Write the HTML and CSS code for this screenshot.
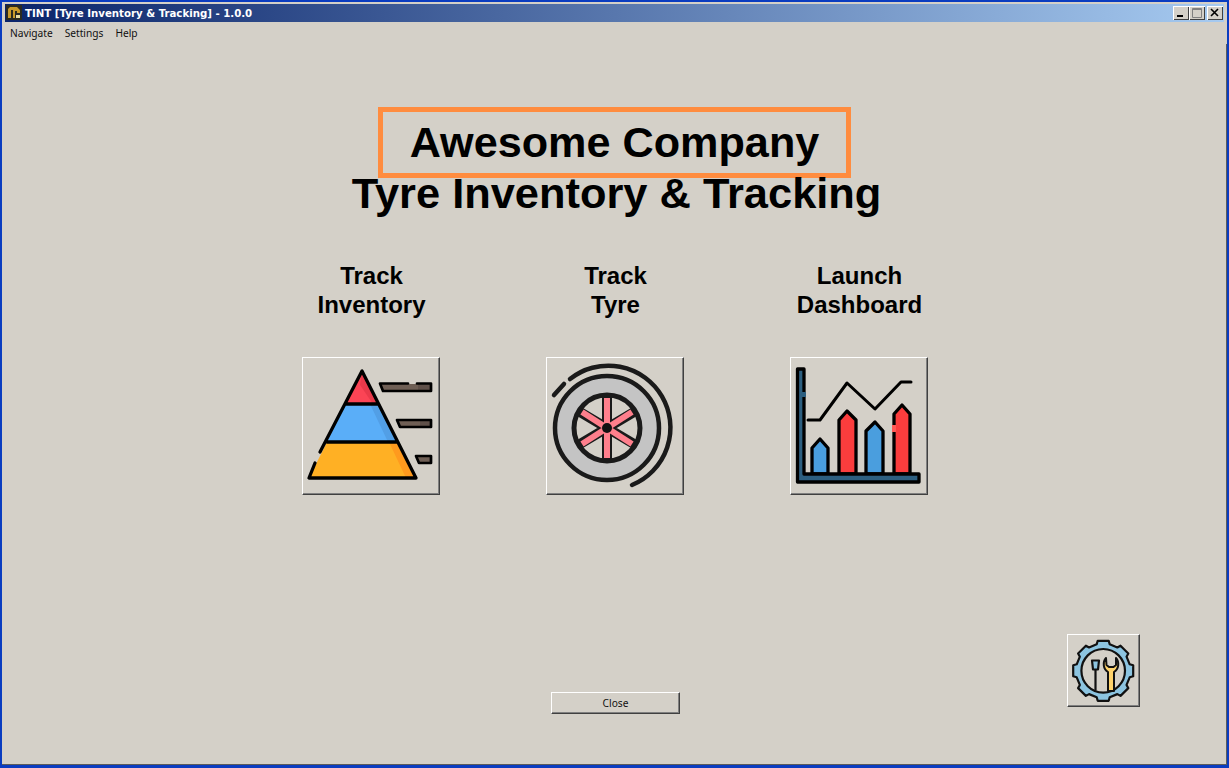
FILE: index.html
```html
<!DOCTYPE html>
<html lang="en">
<head>
  <meta charset="UTF-8" />
  <meta name="viewport" content="width=device-width, initial-scale=1.0" />
  <title>TINT [Tyre Inventory &amp; Tracking] - 1.0.0</title>
  <link rel="stylesheet" href="styles.css">
</head>
<body>
  <div class="window">
    <header class="titlebar">
      <svg class="app-icon" viewBox="0 0 16 16" width="16" height="16">
        <rect x="0" y="0" width="16" height="15" fill="#2b2a20"/>
        <path d="M2 13V4l2-2h7l3 3v3h-3V6H9v7H7V5H5v8z" fill="#c99a2a"/>
        <rect x="10" y="10" width="4" height="3" fill="#e8dca0"/>
      </svg>
      <span class="titlebar-text">TINT [Tyre Inventory &amp; Tracking] - 1.0.0</span>
      <div class="window-controls">
        <span class="win-btn">
          <svg viewBox="0 0 16 14" width="16" height="14"><rect x="4" y="9" width="6" height="2" fill="#000"/></svg>
        </span>
        <span class="win-btn">
          <svg viewBox="0 0 16 14" width="16" height="14"><path d="M3.500 2.500h9v9h-9z M3.500 3.500h9" fill="none" stroke="#808080"/></svg>
        </span>
        <span class="win-btn win-btn-close">
          <svg viewBox="0 0 16 14" width="16" height="14"><path d="M4 3l7 7M11 3l-7 7" fill="none" stroke="#000" stroke-width="1.600"/></svg>
        </span>
      </div>
    </header>

    <nav class="menubar">
      <span>Navigate</span>
      <span>Settings</span>
      <span>Help</span>
    </nav>

    <main class="content">
      <div class="heading">
        <h1 class="company">Awesome Company</h1>
        <h2 class="product">Tyre Inventory &amp; Tracking</h2>
      </div>

      <div class="actions">
        <div class="action">
          <div class="action-label">Track<br>Inventory</div>
          <button class="icon-btn" type="button">
            <svg viewBox="1 1 136 136" width="136" height="136">
              <path d="M60 14L43 47H76z" fill="#fb4455"/>
              <path d="M58 28L60 14L76 47H71z" fill="#e9394a"/>
              <path d="M43 47L25 85H95L76 47z" fill="#5aaef8"/>
              <path d="M68 47l18 38h9L76 47z" fill="#529fe6"/>
              <path d="M25 85L7 121H114L95 85z" fill="#ffb024"/>
              <path d="M87 85l17 36h10L95 85z" fill="#ff9a1e"/>
              <path d="M13 106L7 121H114L60 14L18 95M43 47H76M25 85H95" fill="none" stroke="#000" stroke-width="3.300" stroke-linecap="round" stroke-linejoin="round"/>
              <path d="M78 27H129V34H81z" fill="#6f5f55"/>
              <path d="M95 63H129V70H98z" fill="#6f5f55"/>
              <path d="M114 99H129V106H117z" fill="#6f5f55"/>
              <path d="M116 27H129V34H116zM118 63H129V70H118z" fill="#5f5049"/>
              <path d="M106 26.500H78L81 34H129V26.500H115M95 63H129V70H98zM114 99H129V106H117z" fill="none" stroke="#000" stroke-width="2.700" stroke-linecap="round" stroke-linejoin="round"/>
            </svg>
          </button>
        </div>
        <div class="action">
          <div class="action-label">Track<br>Tyre</div>
          <button class="icon-btn" type="button">
            <svg viewBox="1 1 136 136" width="136" height="136">
              <circle cx="61" cy="71" r="52" fill="#c4c4c4" stroke="#1a1a1a" stroke-width="4.500"/>
              <circle cx="61" cy="71" r="33" fill="#d4d0c8" stroke="#1a1a1a" stroke-width="5"/>
              <path d="M61 40V102M34 55L88 87M88 55L34 87" stroke="#1a1a1a" stroke-width="10"/>
              <path d="M61 41V101M36 55L86 87M86 55L36 87" stroke="#ff7f8c" stroke-width="6"/>
              <circle cx="61" cy="71" r="5" fill="#111"/>
              <path d="M24 22A62 62 0 1 1 86 128M8 38L18 27" fill="none" stroke="#1a1a1a" stroke-width="4.500" stroke-linecap="round"/>
            </svg>
          </button>
        </div>
        <div class="action">
          <div class="action-label">Launch<br>Dashboard</div>
          <button class="icon-btn" type="button">
            <svg viewBox="1 1 136 136" width="136" height="136">
              <path d="M22 117V91L30 82L38 91V117z" fill="#4a9ede" stroke="#000" stroke-width="3.300" stroke-linejoin="round"/>
              <path d="M49 117V63L57 54L66 63V117z" fill="#fb3d3d" stroke="#000" stroke-width="3.300" stroke-linejoin="round"/>
              <path d="M76 117V74L85 65L93 74V117z" fill="#4a9ede" stroke="#000" stroke-width="3.300" stroke-linejoin="round"/>
              <path d="M104 117V57L112 48L120 57V117z" fill="#fb3d3d" stroke="#000" stroke-width="3.300" stroke-linejoin="round"/>
              <path d="M104 68V75" stroke="#ff5a55" stroke-width="4"/>
              <path d="M7.500 12H14V117H129V125H7.500z" fill="#2d5f80" stroke="#000" stroke-width="3.300" stroke-linejoin="round"/>
              <path d="M14 35V40" stroke="#2d5f80" stroke-width="4"/>
              <path d="M18 63H30L57 26L85 52L111 25H121" fill="none" stroke="#000" stroke-width="3" stroke-linecap="round" stroke-linejoin="round"/>
            </svg>
          </button>
        </div>
      </div>

      <footer class="footer">
        <span></span>
        <button class="close-btn" type="button">Close</button>
        <button class="icon-btn icon-btn-small" type="button">
          <svg viewBox="1 1 71 71" width="71" height="71">
            <polygon transform="translate(36.200 36.800)" points="-6.500,-26.500 -5.500,-30 5.500,-30 6.500,-26.500 14.140,-23.340 17.320,-25.100 25.100,-17.320 23.340,-14.140 26.500,-6.500 30,-5.500 30,5.500 26.500,6.500 23.340,14.140 25.100,17.320 17.320,25.100 14.140,23.340 6.500,26.500 5.500,30 -5.500,30 -6.500,26.500 -14.140,23.340 -17.320,25.100 -25.100,17.320 -23.340,14.140 -26.500,6.500 -30,5.500 -30,-5.500 -26.500,-6.500 -23.340,-14.140 -25.100,-17.320 -17.320,-25.100 -14.140,-23.340" fill="#8cc4e0" stroke="#111" stroke-width="2.200" stroke-linejoin="round"/>
            <circle cx="36.200" cy="36.800" r="21.800" fill="#d4d0c8" stroke="#111" stroke-width="2.200"/>
            <path d="M25 26.500h7l-1 9h-5zM28.500 36V56.500" fill="#8cc4e0" stroke="#111" stroke-width="2.200" stroke-linejoin="round"/>
            <path d="M39 24C35.500 28 36 35 41 38V57H47V38C52 35 52.500 28 49 24V31L46.500 33H42L39.500 31z" fill="#ffd36b" stroke="#111" stroke-width="2" stroke-linejoin="round"/>
          </svg>
        </button>
      </footer>
    </main>
  </div>
</body>
</html>
```

FILE: styles.css
```css
* {
  box-sizing: border-box;
}
html, body {
  margin: 0;
  height: 100%;
}
body {
  font-family: "Liberation Sans", Arial, sans-serif;
  background: #0a3cc0;
  overflow: hidden;
}
.window {
  height: 100vh;
  margin: 0 2px;
  padding: 2px 0 3px;
  display: flex;
  flex-direction: column;
}
.titlebar {
  flex: none;
  height: 20px;
  display: flex;
  align-items: center;
  border: solid #d4d0c8;
  border-width: 2px 3px 0;
  background-clip: padding-box;
  background-image: linear-gradient(to right, #0a246a, #a6caf0);
  padding: 0 1px;
  color: #fff;
}
.app-icon {
  flex: none;
}
.titlebar-text {
  margin-left: 3px;
  font-family: "DejaVu Sans", sans-serif;
  font-weight: bold;
  font-size: 10.200px;
  white-space: nowrap;
}
.window-controls {
  margin-left: auto;
  display: flex;
}
.win-btn {
  width: 16px;
  height: 14px;
  display: block;
  background: #d4d0c8;
  box-shadow: inset 1px 1px #fff, inset -1px -1px #404040;
}
.win-btn svg {
  display: block;
}
.win-btn-close {
  margin-left: 2px;
}
.menubar {
  flex: none;
  height: 22px;
  display: flex;
  align-items: center;
  gap: 12px;
  padding-left: 8px;
  background: #d4d0c8;
  font-family: "Noto Sans", sans-serif;
  font-size: 10.200px;
  color: #111;
}
.content {
  flex: 1;
  display: flex;
  flex-direction: column;
  align-items: center;
  padding-top: 63px;
  background: #d4d0c8;
  box-shadow: inset -1px -1px #5c5c5c;
}
.heading {
  text-align: center;
  color: #000;
}
.company {
  margin: 0 auto;
  width: 473px;
  height: 71px;
  border: 5px solid #ff8c3f;
  font-size: 43.200px;
  line-height: 60px;
  white-space: nowrap;
}
.product {
  margin: -7px 0 0;
  padding-left: 4px;
  font-size: 43.400px;
  line-height: 44px;
  white-space: nowrap;
}
.actions {
  margin-top: 46px;
  display: grid;
  grid-template-columns: repeat(3, 138px);
  column-gap: 106px;
}
.action {
  display: flex;
  flex-direction: column;
  align-items: center;
}
.action-label {
  height: 96px;
  padding-left: 2px;
  font-size: 24px;
  font-weight: bold;
  line-height: 29px;
  text-align: center;
  white-space: nowrap;
}
.icon-btn {
  width: 138px;
  height: 138px;
  padding: 0;
  display: block;
  background: #d4d0c8;
  border: 1px solid;
  border-color: #fff #404040 #404040 #fff;
  box-shadow: inset -1px -1px #808080;
}
.icon-btn svg {
  display: block;
}
.icon-btn-small {
  width: 73px;
  height: 73px;
  justify-self: end;
  margin: 0 87px 7px 0;
}
.footer {
  align-self: stretch;
  margin-top: auto;
  padding: 0 0 51px 2px;
  display: grid;
  grid-template-columns: 1fr auto 1fr;
  align-items: end;
}
.close-btn {
  width: 129px;
  height: 22px;
  padding: 0;
  background: #d4d0c8;
  border: 1px solid;
  border-color: #fff #404040 #404040 #fff;
  box-shadow: inset -1px -1px #808080;
  font-family: "Noto Sans", sans-serif;
  font-size: 10.200px;
  color: #111;
}
```
